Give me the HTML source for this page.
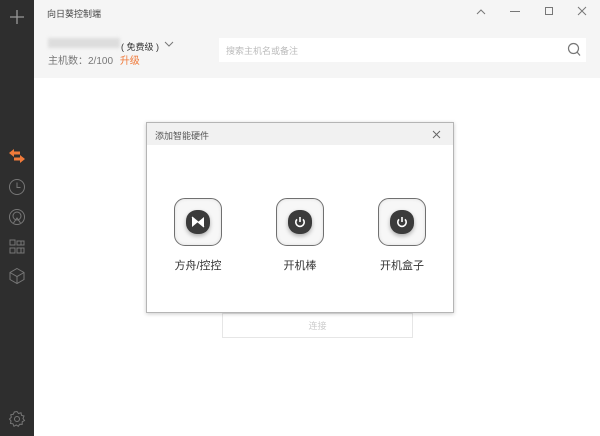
<!DOCTYPE html>
<html><head><meta charset="utf-8"><style>
*{margin:0;padding:0;box-sizing:border-box}
body{width:600px;height:436px;overflow:hidden;position:relative;background:#fff;font-family:"Liberation Sans","Noto Sans CJK SC",sans-serif}
.side{position:absolute;left:0;top:0;width:34px;height:436px;background:#2e2e2e}
.hdr{position:absolute;left:34px;top:0;right:0;height:78px;background:#f5f5f5}
.abs{position:absolute}
.dlg{position:absolute;left:146px;top:122px;width:308px;height:191px;background:#fff;border:1px solid #b5b5b5;box-shadow:0 1px 4px rgba(0,0,0,.2)}
.dh{height:22px;background:#f1f1f1;font-size:9px;color:#555;padding:6px 0 0 8px}
.ib{position:absolute;top:75px;width:48px;height:48px;border:1.5px solid #707070;border-radius:11px;background:#f7f7f7;box-shadow:inset 0 0 3px #ddd}
.ib .c{position:absolute;left:11px;top:11px;width:24px;height:24px;border-radius:45%;background:#3b3b3b;box-shadow:0 2px 4px rgba(0,0,0,.3)}
.lb{position:absolute;top:134px;font-size:11px;color:#333;width:80px;text-align:center}
</style></head><body>
<div class="side">
 <svg class="abs" style="left:8px;top:8px" width="18" height="18"><path d="M9 2V16M2 9H16" stroke="#999" stroke-width="1.3"/></svg>
 <svg class="abs" style="left:7px;top:148px" width="20" height="16"><path d="M2 5L7 1V3.5H13V6.5H7V9Z" fill="#f07a3a"/><path d="M18 11L13 7V9.5H7V12.5H13V15Z" fill="#f07a3a"/></svg>
 <svg class="abs" style="left:8px;top:178px" width="18" height="18" fill="none" stroke="#777" stroke-width="1"><circle cx="9" cy="9" r="7.5"/><path d="M9 4.5V9.5H12.5"/></svg>
 <svg class="abs" style="left:8px;top:208px" width="18" height="18" fill="none" stroke="#777" stroke-width="1"><circle cx="9" cy="9" r="7.5"/><circle cx="9" cy="8" r="4"/><path d="M5.5 15L9 10L12.5 15"/></svg>
 <svg class="abs" style="left:9px;top:239px" width="16" height="16" fill="none" stroke="#777" stroke-width="1"><rect x="1" y="1" width="5" height="5"/><rect x="1" y="9" width="5" height="5"/><rect x="8" y="2" width="4" height="4"/><rect x="8" y="9" width="4" height="5"/><rect x="12" y="2" width="3" height="4"/><rect x="12" y="9" width="3" height="5"/></svg>
 <svg class="abs" style="left:8px;top:267px" width="18" height="18" fill="none" stroke="#777" stroke-width="1"><path d="M9 1.5L16 5.5V12.5L9 16.5L2 12.5V5.5Z M2 5.5L9 9.5L16 5.5 M9 9.5V16.5"/></svg>
 <svg class="abs" style="left:8px;top:410px" width="18" height="18" fill="none" stroke="#777" stroke-width="1"><circle cx="9" cy="9" r="2.5"/><path d="M9 1.5L10.5 3.5L13 2.8L13.5 5.3L16 6L15 8.5L16.5 10.5L14.2 11.8L14.2 14.3L11.7 14.2L10.3 16.3L8.2 15L6 16.3L5 13.8L2.5 13.5L3 11L1.5 9L3.3 7.2L2.8 4.8L5.3 4.3L6.3 2Z"/></svg>
</div>
<div class="hdr">
 <div class="abs" style="left:13px;top:7px;font-size:9px;color:#444">向日葵控制端</div>
 <svg class="abs" style="left:441px;top:7px" width="12" height="10" fill="none" stroke="#777"><path d="M2 7L6 3L10 7"/></svg>
 <div class="abs" style="left:476px;top:11px;width:10px;height:1px;background:#777"></div>
 <div class="abs" style="left:511px;top:7px;width:8px;height:8px;border:1px solid #777"></div>
 <svg class="abs" style="left:543px;top:6px" width="10" height="10" stroke="#777"><path d="M1 1L9 9M9 1L1 9"/></svg>
 <div class="abs" style="left:14px;top:38px;width:72px;height:10px;background:#ddd;filter:blur(1.5px)"></div>
 <div class="abs" style="left:87px;top:40px;font-size:9px;color:#333">( 免费级 )</div>
 <svg class="abs" style="left:130px;top:40px" width="10" height="8" fill="none" stroke="#777"><path d="M1 2L5 6L9 2"/></svg>
 <div class="abs" style="left:14px;top:52px;font-size:10px;color:#777">主机数：2/100 <span style="color:#f07a3a;margin-left:4px">升级</span></div>
 <div class="abs" style="left:185px;top:38px;width:367px;height:24px;background:#fff"></div>
 <div class="abs" style="left:192px;top:44px;font-size:9px;color:#bbb">搜索主机名或备注</div>
 <svg class="abs" style="left:533px;top:42px" width="14" height="15" fill="none" stroke="#777" stroke-width="1.2"><circle cx="6.5" cy="6.5" r="5"/><path d="M10 10L13 13.5"/></svg>
</div>
<div class="abs" style="left:222px;top:313px;width:191px;height:25px;border:1px solid #e6e6e6;font-size:9px;color:#ccc;text-align:center;line-height:24px">连接</div>
<div class="dlg">
 <div class="dh">添加智能硬件</div>
 <svg class="abs" style="left:285px;top:7px" width="9" height="9" stroke="#666"><path d="M1 1L8 8M8 1L1 8"/></svg>
 <div class="ib" style="left:27px"><div class="c"><svg width="24" height="24"><path d="M6 7L12 12L6 17Z M18 7L12 12L18 17Z" fill="#fff"/><path d="M6 7L18 17" stroke="#fff" stroke-width="1.2"/></svg></div></div>
 <div class="ib" style="left:129px"><div class="c"><svg width="24" height="24" fill="none" stroke="#fff" stroke-width="1.6"><path d="M9 9.3A4.2 4.2 0 1 0 15 9.3"/><path d="M12 7V12"/></svg></div></div>
 <div class="ib" style="left:231px"><div class="c"><svg width="24" height="24" fill="none" stroke="#fff" stroke-width="1.6"><path d="M9 9.3A4.2 4.2 0 1 0 15 9.3"/><path d="M12 7V12"/></svg></div></div>
 <div class="lb" style="left:11px">方舟/控控</div>
 <div class="lb" style="left:113px">开机棒</div>
 <div class="lb" style="left:215px">开机盒子</div>
</div>
</body></html>
